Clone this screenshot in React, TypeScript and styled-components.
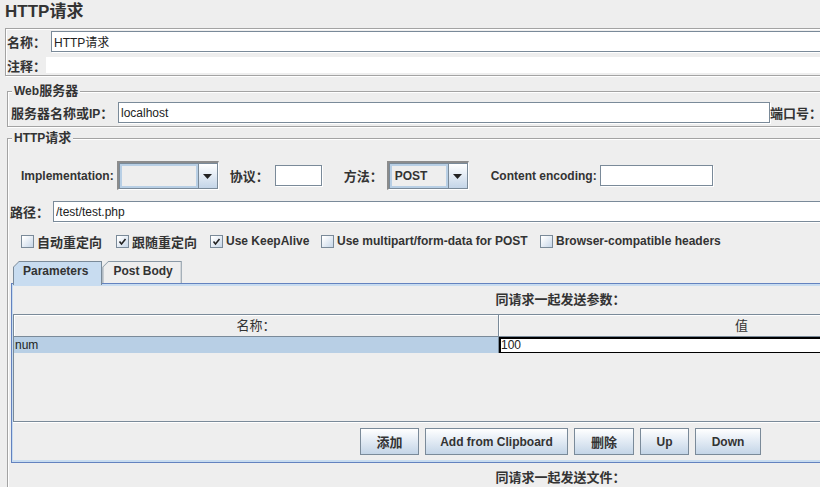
import React from "react"
import styled, { createGlobalStyle } from "styled-components"

const GlobalStyle = createGlobalStyle`
  html, body {
    margin: 0;
    padding: 0;
    background: #eeeeee;
  }
  body {
    font-family: "Liberation Sans", "Noto Sans CJK SC", sans-serif;
    font-size: 12px;
    color: #333333;
  }
  #root {
    width: 820px;
    height: 487px;
    overflow: hidden;
  }
`

// Chinese glyphs in the Swing screenshot run a little larger than the latin ones
const Zh = styled.span`
  font-size: 13px;
`

const Page = styled.div`
  width: 1118px;
  height: 487px;
  overflow: hidden;
  background: #eeeeee;
`

const Title = styled.div`
  height: 28px;
  padding-left: 5px;
  font-size: 17px;
  font-weight: 700;
  line-height: 24px;
`

const NameBox = styled.div`
  margin-left: 5px;
  border: 1px solid #a3a3a3;
  box-shadow: inset 1px 1px 0 #fff, 1px 1px 0 #fff;
  padding: 2px 0 2px 1px;
  display: flex;
  flex-direction: column;
  gap: 5px;
`

const Row = styled.div<{ $h?: number; $pl?: number; $mt?: number }>`
  display: flex;
  align-items: center;
  height: ${p => p.$h ?? 21}px;
  padding-left: ${p => p.$pl ?? 0}px;
  margin-top: ${p => p.$mt ?? 0}px;
`

const Label = styled.span<{ $w?: number; $ml?: number; $mr?: number }>`
  flex: none;
  font-weight: 700;
  white-space: nowrap;
  width: ${p => (p.$w ? `${p.$w}px` : "auto")};
  margin-left: ${p => p.$ml ?? 0}px;
  margin-right: ${p => p.$mr ?? 0}px;
`

const TextField = styled.input<{ $w?: number }>`
  box-sizing: border-box;
  height: 21px;
  margin: 0;
  padding: 0 0 0 2px;
  border: 1px solid #7a8a99;
  box-shadow: 1px 1px 0 #fff;
  background: #fff;
  outline: none;
  font: 12px "Liberation Sans", "Noto Sans CJK SC", sans-serif;
  color: #222;
  width: ${p => (p.$w ? `${p.$w}px` : "auto")};
  flex: ${p => (p.$w ? "none" : "1")};
  min-width: 0;
`

const CommentArea = styled.div`
  flex: 1;
  height: 16px;
  background: #fff;
`

const Group = styled.fieldset<{ $mt: number }>`
  margin: ${p => p.$mt}px 2px 0 7px;
  padding: 0;
  border: 1px solid #a3a3a3;
  box-shadow: inset 1px 1px 0 #fff, 1px 1px 0 #fff;
  min-width: 0;
`

const Legend = styled.legend`
  margin-left: 4px;
  padding: 0 2px;
  background: #eeeeee;
  font-weight: 700;
  line-height: 14px;
`

const WebBody = styled.div`
  padding: 4px 0 3px 2px;
`

const HttpBody = styled.div`
  padding-top: 16px;
  height: 400px;
`

const ComboFrame = styled.div<{ $w: number }>`
  flex: none;
  box-sizing: border-box;
  width: ${p => p.$w}px;
  height: 29px;
  border-top: 2px solid #8c8c8c;
  border-left: 2px solid #8c8c8c;
  border-right: 1px solid #fff;
  border-bottom: 1px solid #fff;
  display: flex;
`

const ComboBox = styled.div`
  flex: 1;
  display: flex;
  border: 1px solid #7a8a99;
  background: #eeeeee;
`

const ComboText = styled.div`
  flex: 1;
  border: 2px solid #b8cfe5;
  padding-left: 3px;
  line-height: 20px;
  font-size: 12px;
  font-weight: 700;
`

const ComboArrow = styled.div`
  width: 18px;
  border-left: 1px solid #7a8a99;
  background: linear-gradient(to bottom, #ffffff, #c4d5e8);
  display: flex;
  align-items: center;
  justify-content: center;
`

const CheckItem = styled.label<{ $w?: number }>`
  display: flex;
  align-items: center;
  gap: 3px;
  flex: none;
  width: ${p => (p.$w ? `${p.$w}px` : "auto")};
  font-weight: 700;
  white-space: nowrap;
`

const Box = styled.span`
  box-sizing: border-box;
  width: 13px;
  height: 13px;
  border: 1px solid #7a8a99;
  background: linear-gradient(135deg, #ffffff 10%, #c6d6e8);
  display: flex;
`

const Tabs = styled.div`
  margin: 11px 5px 0 3px;
`

const TabStrip = styled.div`
  display: flex;
  align-items: flex-start;
  padding-left: 2px;
  height: 22px;
`

const Tab = styled.div<{ $active?: boolean }>`
  position: relative;
  z-index: 1;
  box-sizing: border-box;
  height: ${p => (p.$active ? 24 : 22)}px;
  padding: 1px 1px 0 1px;
  background: ${p => (p.$active ? "#7a8a99" : "#8a99a6")};
  clip-path: polygon(6px 0, 100% 0, 100% 100%, 0 100%, 0 6px);
`

const TabFace = styled.div<{ $active?: boolean }>`
  height: 100%;
  padding: 0 ${p => (p.$active ? 13 : 8)}px 0 ${p => (p.$active ? 9 : 10)}px;
  background: ${p => (p.$active ? "#c8dcf0" : "#eeeeee")};
  clip-path: polygon(5px 0, 100% 0, 100% 100%, 0 100%, 0 5px);
  font-weight: 700;
  line-height: 19px;
`

const TabPanel = styled.div`
  border: 1px solid #6382bf;
  box-shadow: inset 0 2px 0 #c8dcf0, inset 1px 0 0 #c8dcf0, inset 0 -2px 0 #c8dcf0;
  padding: 2px 1px 7px 1px;
`

const Caption = styled.div<{ $h: number }>`
  height: ${p => p.$h}px;
  line-height: ${p => p.$h}px;
  text-align: center;
  font-size: 13px;
  font-weight: 700;
`

const TableArea = styled.div`
  height: 107px;
  border-left: 1px solid #7a8a99;
  border-bottom: 1px solid #7a8a99;
  box-shadow: 0 1px 0 #fff;
`

const TableGrid = styled.div`
  display: grid;
  grid-template-columns: 485px 486px;
  grid-template-rows: 23px 16px;
`

const HeadCell = styled.div`
  box-sizing: border-box;
  border-top: 1px solid #7a8a99;
  border-right: 1px solid #7a8a99;
  border-bottom: 1px solid #7a8a99;
  box-shadow: inset 1px 1px 0 #fff;
  background: #eeeeee;
  text-align: center;
  line-height: 21px;
`

const Cell = styled.div<{ $editing?: boolean }>`
  box-sizing: border-box;
  color: #222;
  background: ${p => (p.$editing ? "#ffffff" : "#b8cfe5")};
  border: ${p => (p.$editing ? "1px solid #000" : "none")};
  border-right: ${p => (p.$editing ? "1px solid #000" : "1px solid #7a8a99")};
  box-shadow: ${p => (p.$editing ? "inset 1px 1px 0 #000" : "none")};
  padding-left: 1px;
  line-height: ${p => (p.$editing ? 14 : 16)}px;
`

const ButtonRow = styled.div`
  display: flex;
  justify-content: center;
  gap: 6px;
  margin-top: 6px;
`

const Button = styled.button<{ $w: number }>`
  box-sizing: border-box;
  width: ${p => p.$w}px;
  height: 27px;
  padding: 0;
  border: 1px solid #7a8a99;
  background: linear-gradient(to bottom, #ffffff 0%, #e4ecf5 45%, #c4d5e7 100%);
  font: 700 12px "Liberation Sans", "Noto Sans CJK SC", sans-serif;
  color: #333;
`

const Arrow = () => (
  <svg width="9" height="5" viewBox="0 0 9 5">
    <polygon points="0,0 9,0 4.5,5" fill="#222" />
  </svg>
)

const Check = ({ on }: { on?: boolean }) => (
  <Box>
    {on && (
      <svg width="11" height="11" viewBox="0 0 11 11">
        <path d="M2.5 5.5 L4.5 8 L8.5 3" stroke="#222" strokeWidth="1.6" fill="none" />
      </svg>
    )}
  </Box>
)

const Combo = ({ w, text }: { w: number; text?: string }) => (
  <ComboFrame $w={w}>
    <ComboBox>
      <ComboText>{text}</ComboText>
      <ComboArrow>
        <Arrow />
      </ComboArrow>
    </ComboBox>
  </ComboFrame>
)

export default function App() {
  return (
    <Page>
      <GlobalStyle />
      <Title>HTTP请求</Title>

      <NameBox>
        <Row>
          <Label $w={44}><Zh>名称：</Zh></Label>
          <TextField defaultValue="HTTP请求" readOnly />
        </Row>
        <Row $h={16}>
          <Label $w={39}><Zh>注释：</Zh></Label>
          <CommentArea />
        </Row>
      </NameBox>

      <Group $mt={8}>
        <Legend>Web<Zh>服务器</Zh></Legend>
        <WebBody>
          <Row $pl={1}>
            <Label $w={107}><Zh>服务器名称或</Zh>IP<Zh>：</Zh></Label>
            <TextField $w={652} defaultValue="localhost" readOnly />
            <Label $mr={4}><Zh>端口号：</Zh></Label>
            <TextField defaultValue="" readOnly />
          </Row>
        </WebBody>
      </Group>

      <Group $mt={4}>
        <Legend>HTTP<Zh>请求</Zh></Legend>
        <HttpBody>
          <Row $h={29} $pl={13}>
            <Label $mr={3}>Implementation:</Label>
            <Combo w={102} />
            <Label $ml={11} $mr={6}><Zh>协议：</Zh></Label>
            <TextField $w={47} readOnly />
            <Label $ml={22} $mr={4}><Zh>方法：</Zh></Label>
            <Combo w={82} text="POST" />
            <Label $ml={22} $mr={3}>Content encoding:</Label>
            <TextField $w={113} readOnly />
          </Row>

          <Row $mt={11} $pl={2}>
            <Label $w={43}><Zh>路径：</Zh></Label>
            <TextField defaultValue="/test/test.php" readOnly />
          </Row>

          <Row $h={18} $mt={10} $pl={13}>
            <CheckItem $w={95}>
              <Check />
              <Zh>自动重定向</Zh>
            </CheckItem>
            <CheckItem $w={94}>
              <Check on />
              <Zh>跟随重定向</Zh>
            </CheckItem>
            <CheckItem $w={111}>
              <Check on />
              Use KeepAlive
            </CheckItem>
            <CheckItem $w={219}>
              <Check />
              Use multipart/form-data for POST
            </CheckItem>
            <CheckItem>
              <Check />
              Browser-compatible headers
            </CheckItem>
          </Row>

          <Tabs>
            <TabStrip>
              <Tab $active>
                <TabFace $active>Parameters</TabFace>
              </Tab>
              <Tab>
                <TabFace>Post Body</TabFace>
              </Tab>
            </TabStrip>
            <TabPanel>
              <Caption $h={28}>同请求一起发送参数：</Caption>
              <TableArea>
                <TableGrid>
                  <HeadCell><Zh>名称：</Zh></HeadCell>
                  <HeadCell><Zh>值</Zh></HeadCell>
                  <Cell>num</Cell>
                  <Cell $editing>100</Cell>
                </TableGrid>
              </TableArea>
              <ButtonRow>
                <Button $w={59}><Zh>添加</Zh></Button>
                <Button $w={143}>Add from Clipboard</Button>
                <Button $w={60}><Zh>删除</Zh></Button>
                <Button $w={49}>Up</Button>
                <Button $w={66}>Down</Button>
              </ButtonRow>
            </TabPanel>
            <Caption $h={30}>同请求一起发送文件：</Caption>
          </Tabs>
        </HttpBody>
      </Group>
    </Page>
  )
}
